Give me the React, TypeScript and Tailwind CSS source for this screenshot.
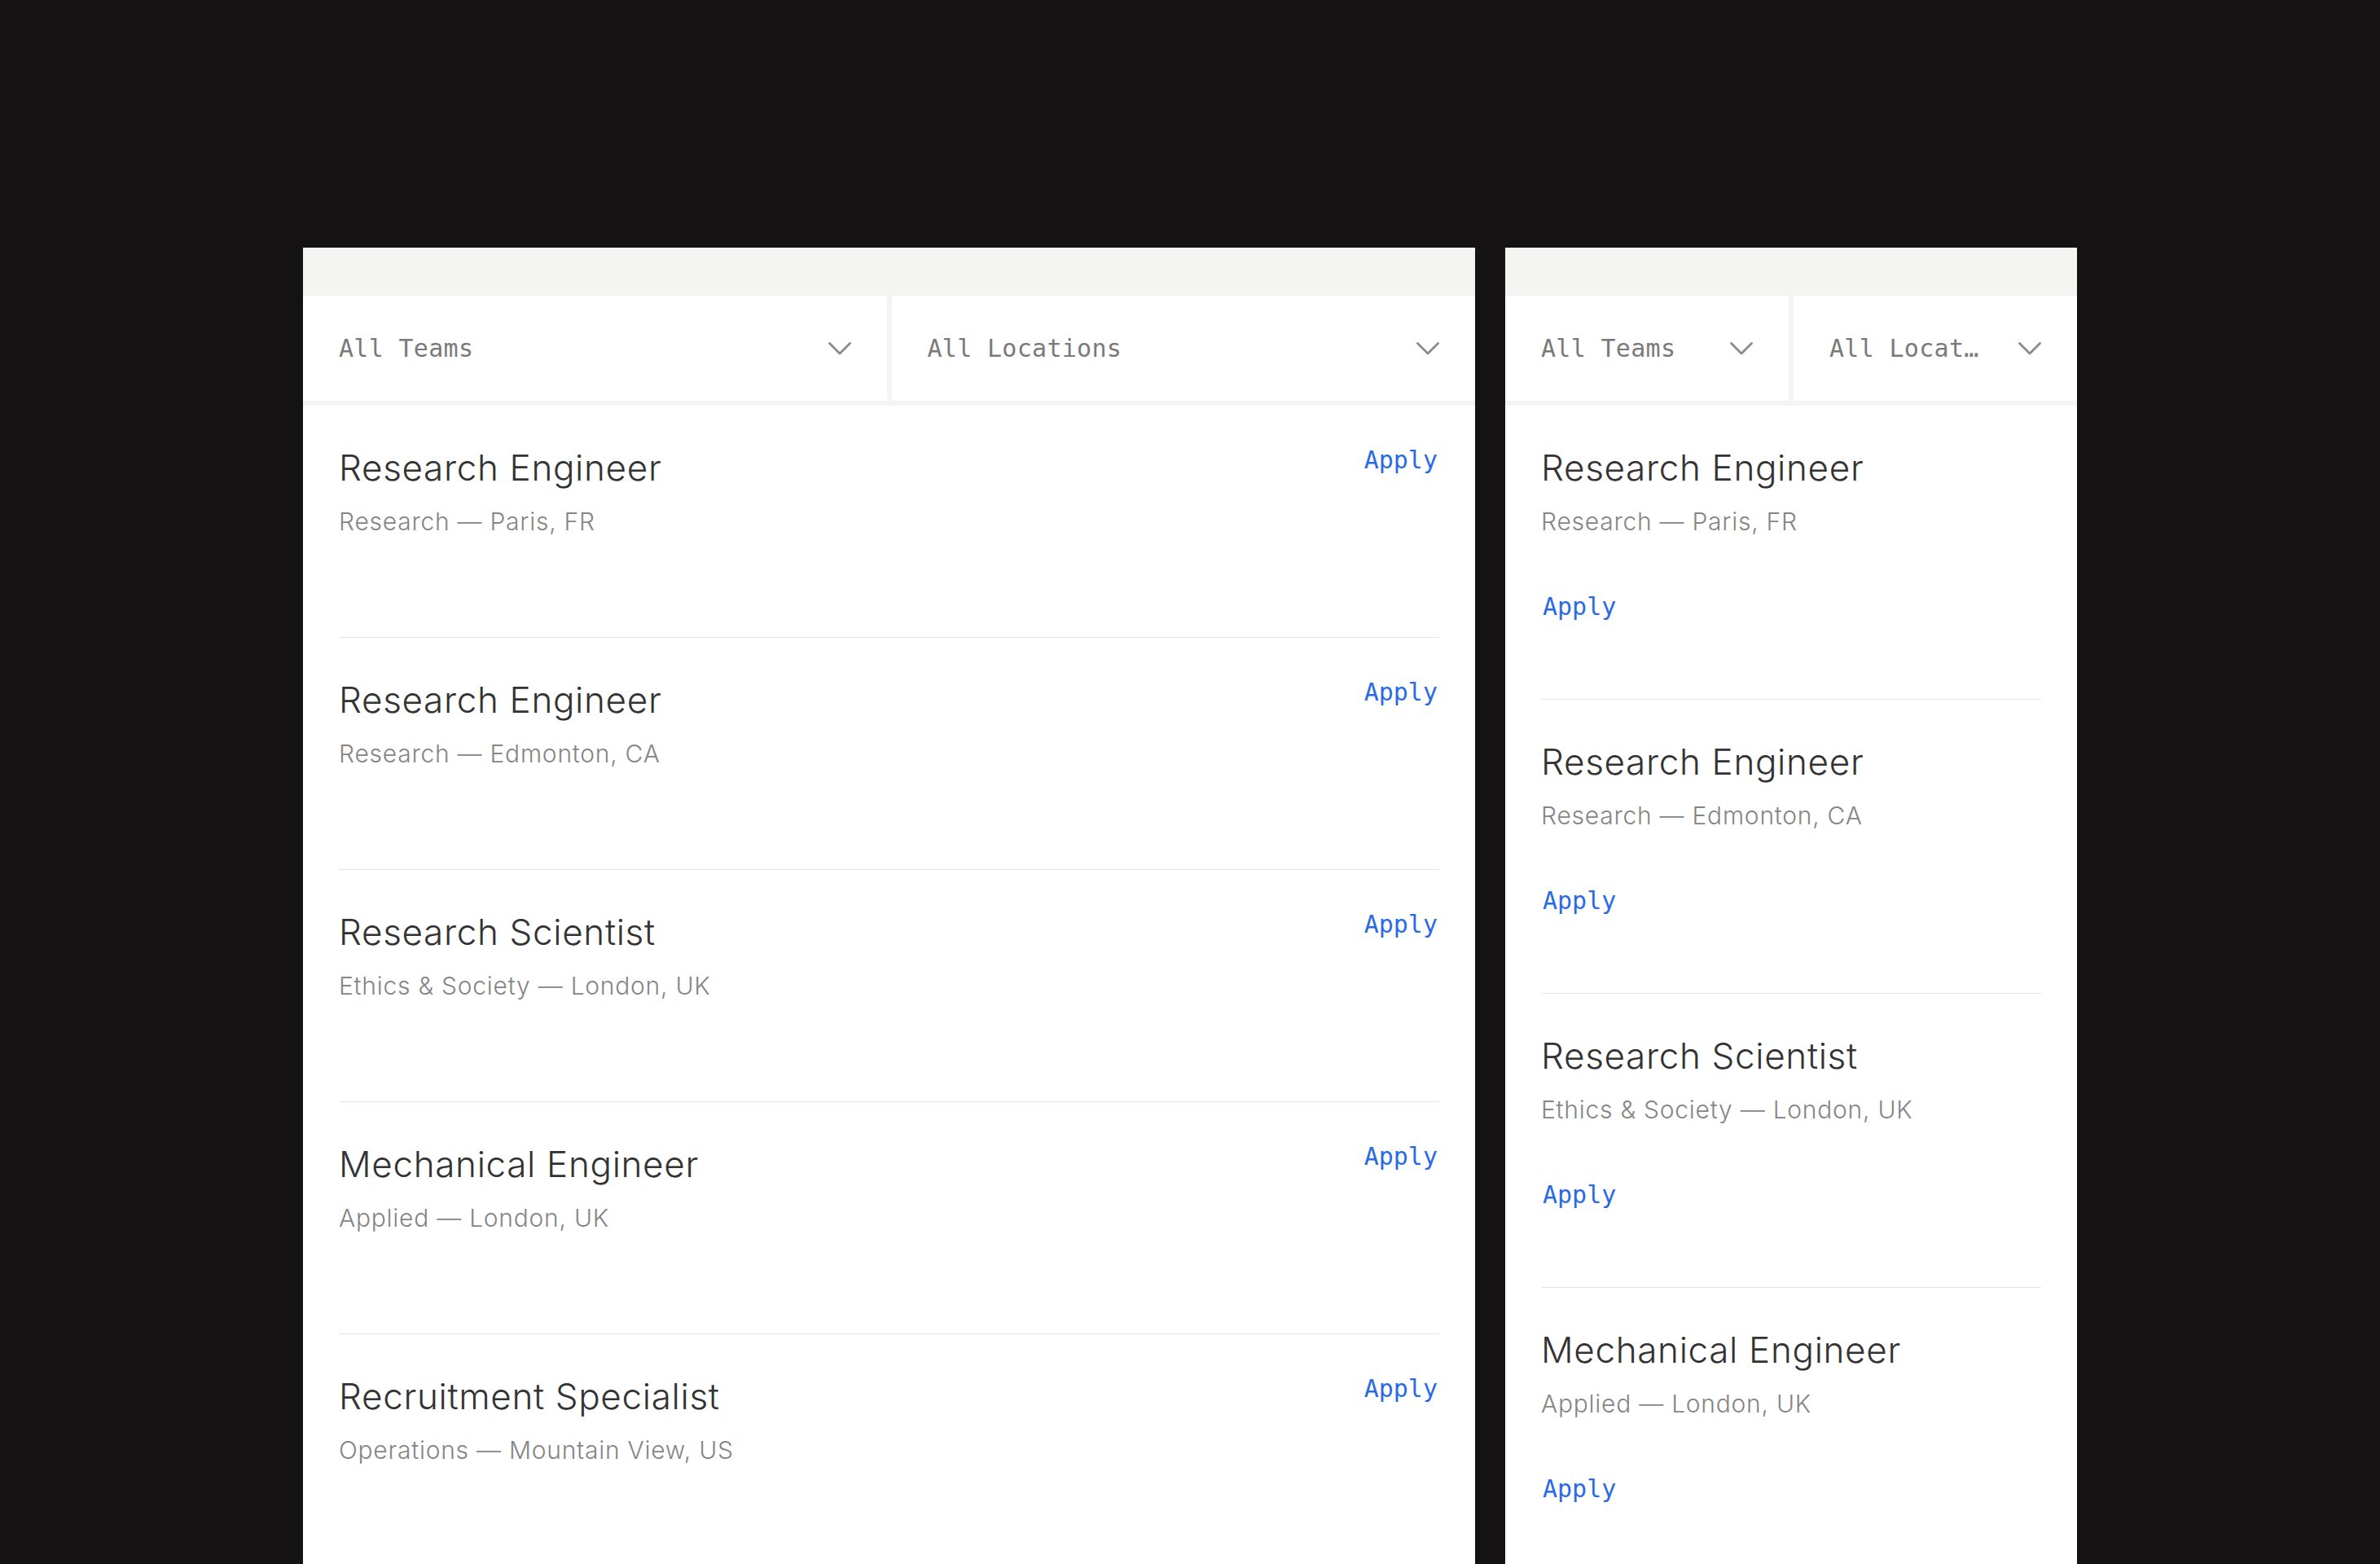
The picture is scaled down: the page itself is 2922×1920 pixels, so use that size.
const jobsWide = [
  { title: "Research Engineer", team: "Research", place: "Paris, FR" },
  { title: "Research Engineer", team: "Research", place: "Edmonton, CA" },
  { title: "Research Scientist", team: "Ethics & Society", place: "London, UK" },
  { title: "Mechanical Engineer", team: "Applied", place: "London, UK" },
  { title: "Recruitment Specialist", team: "Operations", place: "Mountain View, US" },
];

const jobsNarrow = jobsWide.slice(0, 4);

const mono = "font-['DejaVu_Sans_Mono','Liberation_Mono',monospace]";
const sans = "font-['Inter','Noto_Sans',sans-serif]";

function Chevron() {
  return (
    <svg width="28" height="16" viewBox="0 0 28 16" fill="none" className="shrink-0">
      <polyline
        points="1.5,1.5 14,14 26.5,1.5"
        stroke="#8a8a8a"
        strokeWidth="2.8"
        strokeLinecap="round"
        strokeLinejoin="round"
      />
    </svg>
  );
}

function Dropdown({ label }: { label: string }) {
  return (
    <button className="flex-1 min-w-0 h-[129px] bg-white flex items-center px-[44px] text-left">
      <span className={`${mono} flex-1 min-w-0 truncate text-[30px] leading-[40px] tracking-[0.01em] text-[#7a7a7a]`}>
        {label}
      </span>
      <span className="ml-[44px]">
        <Chevron />
      </span>
    </button>
  );
}

function Filters() {
  return (
    <div className="bg-[#f4f4f2]">
      <div className="h-[59px]" />
      <div className="flex gap-[6px] pb-[6px]">
        <Dropdown label="All Teams" />
        <Dropdown label="All Locations" />
      </div>
    </div>
  );
}

function Apply() {
  return (
    <a href="#" className={`${mono} text-[30px] leading-[40px] text-[#2a6ae3] -mt-[1px]`}>
      Apply
    </a>
  );
}

function JobText({ title, team, place }: { title: string; team: string; place: string }) {
  return (
    <div>
      <h3 className={`${sans} font-light text-[44px] leading-[56px] tracking-[0.015em] text-[#333333]`}>
        {title}
      </h3>
      <p className={`${sans} font-light mt-[18px] text-[30px] leading-[40px] tracking-[0.025em] text-[#858585]`}>
        {team} — {place}
      </p>
    </div>
  );
}

function WidePanel() {
  return (
    <section className="w-[1439px] bg-white flex flex-col">
      <Filters />
      <div className="px-[44px]">
        {jobsWide.map((job, i) => (
          <div
            key={i}
            className="flex justify-between items-start pt-[48px] pb-[122px] pr-[2px] border-b border-[#e4e4e2]"
          >
            <JobText {...job} />
            <Apply />
          </div>
        ))}
      </div>
    </section>
  );
}

function NarrowPanel() {
  return (
    <section className="w-[702px] bg-white flex flex-col">
      <Filters />
      <div className="px-[44px]">
        {jobsNarrow.map((job, i) => (
          <div key={i} className="flex flex-col items-start pt-[48px] pb-[93px] border-b border-[#e4e4e2]">
            <JobText {...job} />
            <div className="mt-[65px] pl-[2px]">
              <Apply />
            </div>
          </div>
        ))}
      </div>
    </section>
  );
}

export default function App() {
  return (
    <div className="h-[1920px] w-full overflow-hidden bg-[#141213] flex justify-center items-stretch gap-[37px] pt-[304px]">
      <WidePanel />
      <NarrowPanel />
    </div>
  );
}
